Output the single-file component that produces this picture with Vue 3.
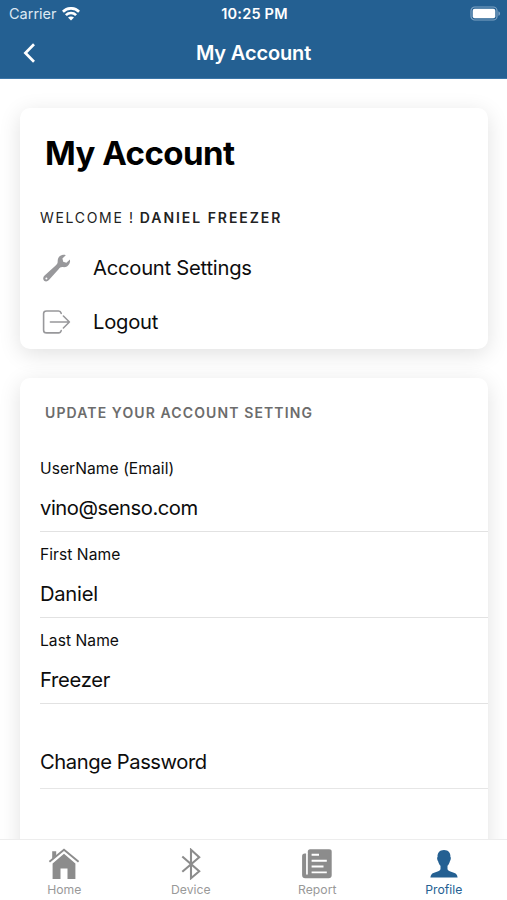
<script setup>
const fields = [
  { label: 'UserName (Email)', value: 'vino@senso.com', id: 'email' },
  { label: 'First Name', value: 'Daniel', id: 'first' },
  { label: 'Last Name', value: 'Freezer', id: 'last' },
]
</script>

<template>
  <div class="screen">
    <header class="header">
      <div class="status">
        <div class="carrier">
          <span class="carrier-name">Carrier</span>
          <svg class="wifi" width="18" height="14" viewBox="0 0 18 14">
            <g fill="none" stroke="#fff" stroke-width="2.7">
              <path d="M0.9 4.7C5.4.2 12.6.2 17.1 4.7" />
              <path d="M3.9 8.1C6.8 5.3 11.2 5.3 14.1 8.1" />
            </g>
            <path d="M9 13.6 6 10.6C7.6 9 10.4 9 12 10.6Z" fill="#fff" />
          </svg>
        </div>
        <span class="time">10:25 PM</span>
        <div class="power">
          <svg width="31" height="15" viewBox="0 0 31 15">
            <rect x="1" y="1" width="26" height="13" rx="3.8" fill="none" stroke="#7fa3c4" stroke-width="1.2" />
            <rect x="2.7" y="2.7" width="22.6" height="9.6" rx="2" fill="#fff" />
            <path d="M28.4 5.2C30.6 6 30.6 9 28.4 9.8Z" fill="#7fa3c4" />
          </svg>
        </div>
      </div>
      <div class="toolbar">
        <svg class="back" width="14" height="22" viewBox="0 0 14 22">
          <path d="M11 2.2 2.4 11 11 19.8" fill="none" stroke="#fff" stroke-width="2.7" />
        </svg>
        <span class="title">My Account</span>
        <span></span>
      </div>
    </header>

    <main class="content">
      <section class="card account">
        <h1>My Account</h1>
        <p class="welcome"><span>WELCOME !</span><b>DANIEL FREEZER</b></p>
        <div class="row">
          <svg width="30" height="30" viewBox="0 0 30 30">
            <path d="M27.9 6.6 24.4 9.8 21.2 8.8 20.4 5.6 23.8 2.2C21.2 1.2 18.2 2.2 16.6 4.4 15.5 6 15.8 7.8 15.6 9.4 15.4 10.8 14.4 11.8 13.4 12.7L2.6 22.6C.8 24.3.8 26.5 2.1 27.7 3.5 29 5.5 28.7 6.9 27.1L16.6 16.2C17.6 15 18.6 14.1 20.2 14.1 21.8 14.1 23.4 14.4 25 13.4 27.4 12 28.6 9.2 27.9 6.6ZM4.4 24.6A1 1 0 1 1 4.4 26.6 1 1 0 0 1 4.4 24.6Z" fill="#98989b" fill-rule="evenodd" />
          </svg>
          <span>Account Settings</span>
        </div>
        <div class="row">
          <svg width="30" height="30" viewBox="0 0 30 30">
            <g fill="none" stroke="#98989b" stroke-width="1.6" stroke-linecap="round" stroke-linejoin="round">
              <path d="M19.2 6.4V6.2C18.8 4.8 18.2 4 16.6 4H4.6C2.6 4 1.6 5 1.6 6.6V23.2C1.6 24.9 2.6 25.9 4.6 25.9H16.6C18.2 25.9 18.8 25.1 19.2 23.6" />
              <path d="M8.4 15H27.4M21.4 9 27.4 15 21.4 21" />
            </g>
          </svg>
          <span>Logout</span>
        </div>
      </section>

      <section class="card update">
        <h2>UPDATE YOUR ACCOUNT SETTING</h2>
        <div v-for="f in fields" :key="f.id" class="field" :class="f.id">
          <div class="label">{{ f.label }}</div>
          <div class="value">{{ f.value }}</div>
        </div>
        <div class="change">Change Password</div>
      </section>
    </main>

    <nav class="tabs">
      <div class="tab">
        <svg width="32" height="32" viewBox="0 0 32 32">
          <path d="M16 5.8 27.4 15.6V31H19.5V20.4H12.5V31H4.6V15.6Z" fill="#8c8c8c" />
          <path d="M4.2 3.2H8.2V7.4L4.2 10.8Z" fill="#8c8c8c" />
          <path d="M1.4 13.7 16 1.8 30.6 13.7" fill="none" stroke="#8c8c8c" stroke-width="1.9" />
        </svg>
        <span>Home</span>
      </div>
      <div class="tab">
        <svg width="32" height="32" viewBox="0 0 32 32">
          <path d="M7.3 8.5 24.2 23.3 16 30.2V1.8L24.2 9.2 7.3 23.8" fill="none" stroke="#8c8c8c" stroke-width="2.1" />
        </svg>
        <span>Device</span>
      </div>
      <div class="tab">
        <svg width="32" height="32" viewBox="0 0 32 32">
          <path d="M9.1 1.3H28.2C29.8 1.3 30.7 2.1 30.7 3.7V27.2C30.7 29 29.5 30.2 27.6 30.2H4.2C2.4 30.2 1.1 29.2 1.1 26.9V8.3C1.1 6.5 2 5.6 3.8 5.6H6.8V3.7C6.8 2.2 7.6 1.3 9.1 1.3Z" fill="#8c8c8c" />
          <path d="M5.1 5V25.4C5.1 27.3 6.8 27.3 6.8 25.4V5Z" fill="#fff" />
          <path d="M10.6 6.8H18M10.6 12.8H25.8M10.6 18.5H22.5M10.6 24.4H25.8" stroke="#fff" stroke-width="1.9" fill="none" />
        </svg>
        <span>Report</span>
      </div>
      <div class="tab active">
        <svg width="32" height="32" viewBox="0 0 32 32">
          <path d="M16 2C11.7 2 9.2 4.8 9.6 9 8.7 9.2 9.2 12.2 10.1 13.2 10.5 15.1 11.4 16.7 12.5 17.8V21.3C11.3 24.1 5.3 24 3.5 26.4 2.7 27.4 2.6 28.5 2.4 29.5H29.6C29.4 28.5 29.3 27.4 28.5 26.4 26.7 24 20.7 24.1 19.5 21.3V17.8C20.6 16.7 21.5 15.1 21.9 13.2 22.8 12.2 23.3 9.2 22.4 9 22.8 4.8 20.3 2 16 2Z" fill="#246092" />
        </svg>
        <span>Profile</span>
      </div>
    </nav>
  </div>
</template>

<style>
body {
  margin: 0;
  background: #fff;
}
</style>

<style scoped>
.screen {
  display: flex;
  flex-direction: column;
  width: 507px;
  height: 900px;
  overflow: hidden;
  background: #fff;
  color: #0d0d0d;
  font-family: Inter, "Liberation Sans", sans-serif;
  white-space: nowrap;
}
.header {
  flex: none;
  height: 79px;
  box-sizing: border-box;
  border-bottom: 1px solid #3c76a8;
  background: #246092;
  color: #fff;
}
.status {
  display: grid;
  grid-template-columns: 1fr auto 1fr;
  align-items: center;
  height: 27px;
  padding: 0 6px 0 9px;
}
.carrier {
  display: flex;
  align-items: center;
  gap: 5px;
}
.carrier-name {
  font-size: 14.5px;
  color: #dce8f2;
}
.time {
  margin-left: -1px;
  font-size: 14.5px;
  font-weight: 600;
  letter-spacing: 0.2px;
}
.power {
  display: flex;
  justify-content: flex-end;
}
.toolbar {
  display: grid;
  grid-template-columns: 1fr auto 1fr;
  align-items: center;
  height: 51px;
  padding: 0 22px;
}
.back {
  margin-left: 1px;
}
.title {
  font-size: 20px;
  font-weight: 600;
  letter-spacing: -0.15px;
}
.content {
  flex: 1;
  min-height: 0;
  overflow: hidden;
  padding: 29px 19px 0 20px;
}
.card {
  box-sizing: border-box;
  border-radius: 10px;
  background: #fff;
  box-shadow: 0 5px 22px rgba(0, 0, 0, 0.12);
}
.account {
  height: 241px;
  padding-top: 20px;
}
h1 {
  margin: 0;
  padding-left: 25px;
  font-size: 33px;
  line-height: 50px;
  font-weight: 700;
  letter-spacing: -0.53px;
  color: #000;
}
.welcome {
  display: flex;
  gap: 5px;
  margin: 0;
  padding: 29px 0 13px 20px;
  font-size: 14px;
  line-height: 21px;
  letter-spacing: 1.68px;
  color: #222;
}
.welcome b {
  font-weight: 600;
  letter-spacing: 1.95px;
}
.row {
  display: flex;
  align-items: center;
  gap: 21px;
  height: 54px;
  padding-left: 22px;
  font-size: 20.2px;
  letter-spacing: -0.24px;
}
.row span {
  padding-bottom: 1px;
}
.update {
  height: 560px;
  margin-top: 29px;
  padding-top: 22px;
}
h2 {
  margin: 0;
  padding: 0 0 34px 25px;
  font-size: 14px;
  line-height: 25px;
  font-weight: 600;
  letter-spacing: 1.11px;
  color: #6c6c6c;
}
.field {
  box-sizing: border-box;
  height: 86px;
  margin-left: 20px;
  border-bottom: 1px solid #e2e2e2;
}
.field:first-of-type {
  height: 73px;
}
.label {
  font-size: 15.6px;
  line-height: 20px;
  letter-spacing: 0.05px;
}
.field + .field {
  padding-top: 13px;
}
.value {
  padding-top: 14px;
  font-size: 20.2px;
  line-height: 30px;
  letter-spacing: -0.27px;
}
.email .value {
  letter-spacing: -0.45px;
}
.change {
  box-sizing: border-box;
  height: 85px;
  margin-left: 20px;
  padding-top: 43px;
  border-bottom: 1px solid #e6e6e6;
  font-size: 20.2px;
  line-height: 30px;
  letter-spacing: -0.43px;
}
.tabs {
  display: grid;
  grid-template-columns: repeat(4, 1fr);
  flex: none;
  box-sizing: border-box;
  height: 61px;
  padding-left: 1px;
  border-top: 1px solid #ededed;
  background: #fff;
}
.tab {
  display: flex;
  flex-direction: column;
  align-items: center;
  padding-top: 8px;
  font-size: 12.2px;
  line-height: 20px;
  color: #999;
}
.active {
  color: #246092;
}
</style>
